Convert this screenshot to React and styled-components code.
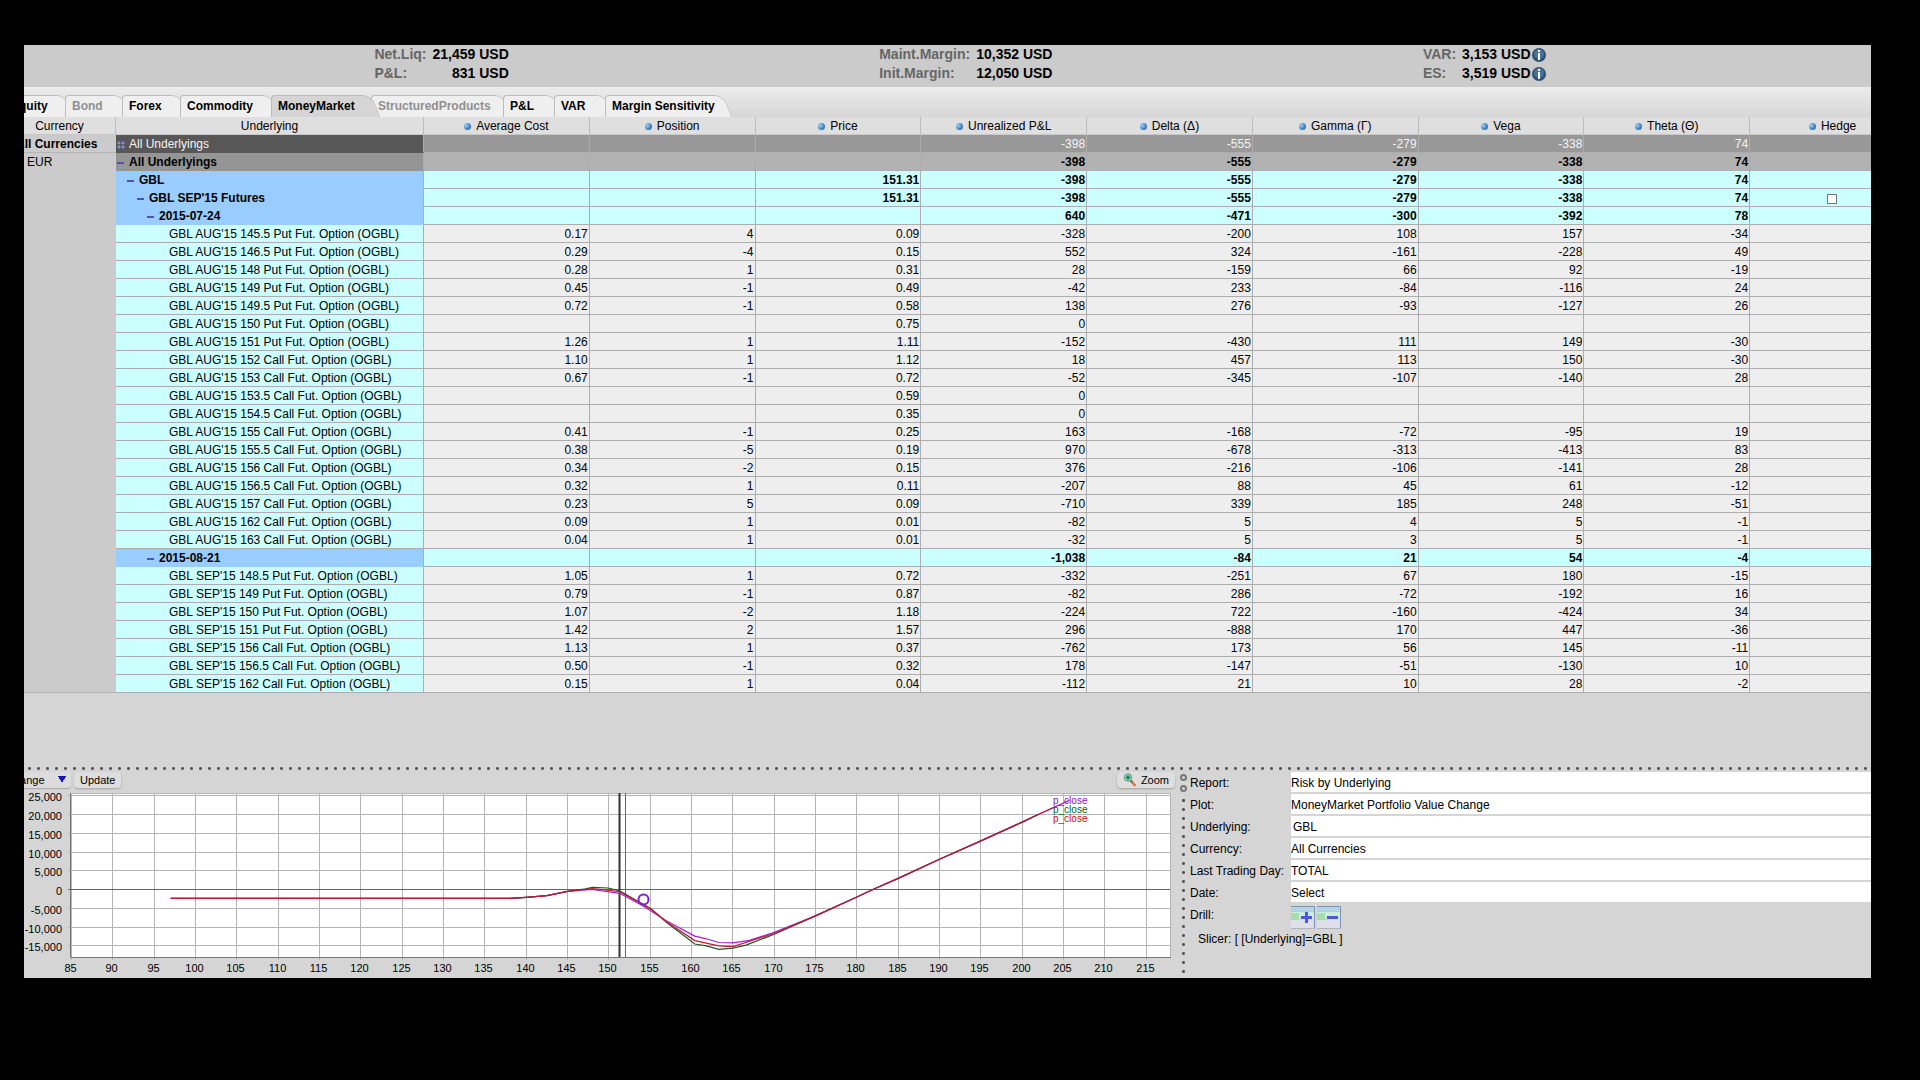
import React from "react";
import styled, { createGlobalStyle, css } from "styled-components";

const GlobalStyle = createGlobalStyle`
  * {
    box-sizing: border-box;
  }
  body {
    margin: 0;
    background: #000;
    color: #000;
    font-family: "Liberation Sans", Arial, sans-serif;
    font-size: 12px;
  }
  button,
  input,
  select {
    margin: 0;
    color: inherit;
    font-family: inherit;
    font-size: inherit;
  }
`;

const summary = [
  [
    { label: "Net.Liq:", value: "21,459 USD" },
    { label: "P&L:", value: "831 USD" },
  ],
  [
    { label: "Maint.Margin:", value: "10,352 USD" },
    { label: "Init.Margin:", value: "12,050 USD" },
  ],
  [
    { label: "VAR:", value: "3,153 USD", info: true },
    { label: "ES:", value: "3,519 USD", info: true },
  ],
];

const tabs = [
  { name: "Equity", width: 61 },
  { name: "Bond", width: 57, disabled: true },
  { name: "Forex", width: 58 },
  { name: "Commodity", width: 91 },
  { name: "MoneyMarket", width: 100, active: true },
  { name: "StructuredProducts", width: 132, disabled: true },
  { name: "P&L", width: 51 },
  { name: "VAR", width: 51 },
  { name: "Margin Sensitivity", width: 118 },
];

const measures = [
  "Average Cost",
  "Position",
  "Price",
  "Unrealized P&L",
  "Delta (Δ)",
  "Gamma (Γ)",
  "Vega",
  "Theta (Θ)",
  "Hedge",
];

// name, avg cost, position, price, unrealized, delta, gamma, vega, theta
const option = (...values) => ({ kind: "option", level: 4, values });
const group = (level, ...values) => ({ kind: "group", level, values });

const rows = [
  {
    kind: "selected",
    level: 0,
    values: ["All Underlyings", "", "", "", "-398", "-555", "-279", "-338", "74"],
  },
  {
    kind: "total",
    level: 0,
    values: ["All Underlyings", "", "", "", "-398", "-555", "-279", "-338", "74"],
  },
  group(1, "GBL", "", "", "151.31", "-398", "-555", "-279", "-338", "74"),
  {
    ...group(2, "GBL SEP'15 Futures", "", "", "151.31", "-398", "-555", "-279", "-338", "74"),
    hedge: true,
  },
  group(3, "2015-07-24", "", "", "", "640", "-471", "-300", "-392", "78"),
  option("GBL AUG'15 145.5 Put Fut. Option (OGBL)", "0.17", "4", "0.09", "-328", "-200", "108", "157", "-34"),
  option("GBL AUG'15 146.5 Put Fut. Option (OGBL)", "0.29", "-4", "0.15", "552", "324", "-161", "-228", "49"),
  option("GBL AUG'15 148 Put Fut. Option (OGBL)", "0.28", "1", "0.31", "28", "-159", "66", "92", "-19"),
  option("GBL AUG'15 149 Put Fut. Option (OGBL)", "0.45", "-1", "0.49", "-42", "233", "-84", "-116", "24"),
  option("GBL AUG'15 149.5 Put Fut. Option (OGBL)", "0.72", "-1", "0.58", "138", "276", "-93", "-127", "26"),
  option("GBL AUG'15 150 Put Fut. Option (OGBL)", "", "", "0.75", "0", "", "", "", ""),
  option("GBL AUG'15 151 Put Fut. Option (OGBL)", "1.26", "1", "1.11", "-152", "-430", "111", "149", "-30"),
  option("GBL AUG'15 152 Call Fut. Option (OGBL)", "1.10", "1", "1.12", "18", "457", "113", "150", "-30"),
  option("GBL AUG'15 153 Call Fut. Option (OGBL)", "0.67", "-1", "0.72", "-52", "-345", "-107", "-140", "28"),
  option("GBL AUG'15 153.5 Call Fut. Option (OGBL)", "", "", "0.59", "0", "", "", "", ""),
  option("GBL AUG'15 154.5 Call Fut. Option (OGBL)", "", "", "0.35", "0", "", "", "", ""),
  option("GBL AUG'15 155 Call Fut. Option (OGBL)", "0.41", "-1", "0.25", "163", "-168", "-72", "-95", "19"),
  option("GBL AUG'15 155.5 Call Fut. Option (OGBL)", "0.38", "-5", "0.19", "970", "-678", "-313", "-413", "83"),
  option("GBL AUG'15 156 Call Fut. Option (OGBL)", "0.34", "-2", "0.15", "376", "-216", "-106", "-141", "28"),
  option("GBL AUG'15 156.5 Call Fut. Option (OGBL)", "0.32", "1", "0.11", "-207", "88", "45", "61", "-12"),
  option("GBL AUG'15 157 Call Fut. Option (OGBL)", "0.23", "5", "0.09", "-710", "339", "185", "248", "-51"),
  option("GBL AUG'15 162 Call Fut. Option (OGBL)", "0.09", "1", "0.01", "-82", "5", "4", "5", "-1"),
  option("GBL AUG'15 163 Call Fut. Option (OGBL)", "0.04", "1", "0.01", "-32", "5", "3", "5", "-1"),
  group(3, "2015-08-21", "", "", "", "-1,038", "-84", "21", "54", "-4"),
  option("GBL SEP'15 148.5 Put Fut. Option (OGBL)", "1.05", "1", "0.72", "-332", "-251", "67", "180", "-15"),
  option("GBL SEP'15 149 Put Fut. Option (OGBL)", "0.79", "-1", "0.87", "-82", "286", "-72", "-192", "16"),
  option("GBL SEP'15 150 Put Fut. Option (OGBL)", "1.07", "-2", "1.18", "-224", "722", "-160", "-424", "34"),
  option("GBL SEP'15 151 Put Fut. Option (OGBL)", "1.42", "2", "1.57", "296", "-888", "170", "447", "-36"),
  option("GBL SEP'15 156 Call Fut. Option (OGBL)", "1.13", "1", "0.37", "-762", "173", "56", "145", "-11"),
  option("GBL SEP'15 156.5 Call Fut. Option (OGBL)", "0.50", "-1", "0.32", "178", "-147", "-51", "-130", "10"),
  option("GBL SEP'15 162 Call Fut. Option (OGBL)", "0.15", "1", "0.04", "-112", "21", "10", "28", "-2"),
];

const head = [
  [97, -2200],
  [138, -2200],
  [140, -1950],
  [142.5, -1500],
  [145, -350],
];

const tail = [
  [175, -6900],
  [180, -1870],
  [182, 190],
  [185, 3100],
  [190, 8200],
  [195, 13100],
  [200, 18100],
  [202, 20200],
];

const series = [
  {
    color: "#a51fd0",
    points: [...head, [148, 130], [151.3, -880], [154.1, -4200], [157, -8300], [160.4, -12300], [161.8, -13000], [163.3, -14000], [165, -14100], [167, -13400], [170, -11300], ...tail, [205.7, 23900]],
  },
  {
    color: "#1d5a24",
    points: [...head, [147.2, 300], [148, 700], [149.9, 530], [151.3, -190], [155.1, -5000], [157, -8700], [160.4, -14400], [161.8, -14900], [163.3, -15800], [165, -15500], [166.6, -14700], [170, -11800], ...tail],
  },
  {
    color: "#c2183c",
    points: [...head, [148, 400], [151.3, -450], [154.1, -3900], [155.1, -5100], [157, -8500], [160.4, -13500], [163.3, -14900], [165, -15100], [170, -11600], ...tail, [204, 22200]],
  },
];

const fields = [
  { label: "Report:", value: "Risk by Underlying" },
  { label: "Plot:", value: "MoneyMarket Portfolio Value Change" },
  { label: "Underlying:", value: "GBL", text: true },
  { label: "Currency:", value: "All Currencies" },
  { label: "Last Trading Day:", value: "TOTAL" },
  { label: "Date:", value: "Select" },
];

const InfoIcon = () => (
  <svg width="14" height="16" viewBox="0 0 14 16" aria-hidden="true">
    <circle cx="7" cy="8" r="7" fill="#2f5274" />
    <circle cx="7" cy="7" r="5" fill="#4c7196" />
    <path d="M6 3h2v2H6zM6 6h2v7H6z" fill="#fff" />
  </svg>
);

const MagnifierIcon = () => (
  <svg width="14" height="14" viewBox="0 0 14 14" aria-hidden="true">
    <path d="M8 8l4.500 5" stroke="#e0713f" strokeWidth="2.400" />
    <path d="M7.500 7.500l2 2" stroke="#8a6a50" strokeWidth="2" />
    <circle cx="5" cy="4.500" r="3.800" fill="#7fd0b4" stroke="#6d9f90" strokeWidth="1" />
    <path d="M5 2.500v4M3 4.500h4" stroke="#16703f" strokeWidth="1.300" />
  </svg>
);

const DrillIcon = ({ plus }) => (
  <svg width="24" height="23" viewBox="0 0 24 23" aria-hidden="true">
    <rect width="24" height="23" fill="#dde0e8" />
    <rect width="24" height="5" fill="#b4d4ec" />
    <rect y="5" width="24" height="8" fill="#cdeedd" />
    <rect y="7" width="8" height="6" fill="#a5dfae" />
    <path d="M0 5.500h24M0 13.500h10" stroke="#b5ccd4" />
    <path d="M0 .5h23.500V23" fill="none" stroke="#7e93b8" />
    <path d="M0 22.500h24" stroke="#b0b4bd" />
    <path d="M10 11.500h11" stroke="#4a5ad8" strokeWidth="3" />
    {plus && <path d="M15.500 6v11" stroke="#4a5ad8" strokeWidth="3" />}
  </svg>
);

const PLOT = { left: 46, right: 1147, top: 3, bottom: 167 };
const px = (price) => 47.5 + (price - 85) * 8.267;
const py = (value) => Math.round(100 - value * 0.00375) - 0.5;
const line = (points) =>
  points.map(([x, v]) => `${px(x).toFixed(1)},${(100 - v * 0.00375).toFixed(1)}`).join(" ");

const prices = Array.from({ length: 27 }, (_, i) => 85 + i * 5);
const levels = Array.from({ length: 9 }, (_, i) => 25000 - i * 5000);

const ValueChart = () => (
  <ChartSvg viewBox="0 0 1155 188" role="img" aria-label="Portfolio value change">
    <rect
      x={PLOT.left}
      y={PLOT.top}
      width={PLOT.right - PLOT.left}
      height={PLOT.bottom - PLOT.top}
      fill="#fff"
    />
    {prices.map((price) => {
      const x = Math.floor(px(price)) + 0.5;
      return (
        <g key={price}>
          <path d={`M${x} ${PLOT.top}V${PLOT.bottom + 3}`} stroke="#b4b4b4" />
          <text x={x - 1} y="182" textAnchor="middle">
            {price}
          </text>
        </g>
      );
    })}
    {levels.map((value) => (
      <g key={value}>
        <path
          d={`M${PLOT.left - 2} ${py(value)}H${PLOT.right}`}
          stroke={value === 0 ? "#666" : "#b4b4b4"}
        />
        <text x="38" y={py(value) + 5} textAnchor="end">
          {value.toLocaleString("en-US")}
        </text>
      </g>
    ))}
    <path
      d={`M${PLOT.left} ${PLOT.top + 0.5}H${PLOT.right - 0.5}V${PLOT.bottom}`}
      fill="none"
      stroke="#b4b4b4"
    />
    <path
      d={`M${PLOT.left + 0.5} ${PLOT.top}V${PLOT.bottom + 0.5}H${PLOT.right}`}
      fill="none"
      stroke="#777"
    />
    <path d={`M595.500 ${PLOT.top}V${PLOT.bottom}`} stroke="#333" strokeWidth="2" />
    <path d={`M601.500 ${PLOT.top}V${PLOT.bottom}`} stroke="#666" />
    {series.map(({ color, points }) => (
      <polyline key={color} points={line(points)} fill="none" stroke={color} strokeWidth="1.200" />
    ))}
    <circle cx="619.500" cy="109.500" r="5" fill="none" stroke="#7a1fd6" strokeWidth="2" />
    <Legend>
      <text x="1029" y="14" fill="#8a10cc">p_close</text>
      <text x="1029" y="23" fill="#006a12">p_close</text>
      <text x="1029" y="32" fill="#d00808">p_close</text>
    </Legend>
  </ChartSvg>
);

const App = () => {
  return (
    <Page>
      <GlobalStyle />
      <Frame>
        <Workspace>
          <Summary>
            {summary.map((items) => (
              <Metrics key={items[0].label}>
                {items.map(({ label, value, info }) => (
                  <React.Fragment key={label}>
                    <dt>{label}</dt>
                    <dd>
                      {value}
                      {info && <InfoIcon />}
                    </dd>
                  </React.Fragment>
                ))}
              </Metrics>
            ))}
          </Summary>
          <TabBar role="tablist">
            {tabs.map(({ name, width, active, disabled }) => (
              <Tab
                key={name}
                type="button"
                role="tab"
                aria-selected={!!active}
                disabled={disabled}
                $width={width}
                $active={active}
              >
                <span>{name}</span>
              </Tab>
            ))}
          </TabBar>
          <RiskTable>
            <colgroup>
              <col className="currency" />
              <col className="underlying" />
              {measures.map((name) => (
                <col key={name} />
              ))}
            </colgroup>
            <thead>
              <tr>
                <HeadCell scope="col">Currency</HeadCell>
                <HeadCell scope="col">Underlying</HeadCell>
                {measures.map((name) => (
                  <HeadCell key={name} scope="col">
                    <Ball />
                    {name}
                  </HeadCell>
                ))}
              </tr>
            </thead>
            <tbody>
              {rows.map(({ kind, level, values, hedge }, index) => {
                const [name, ...numbers] = values;
                return (
                  <Row key={index} $kind={kind}>
                    {index === 0 && <CurrencyCell $all>All Currencies</CurrencyCell>}
                    {index === 1 && <CurrencyCell rowSpan={rows.length - 1}>EUR</CurrencyCell>}
                    <NameCell scope="row" $kind={kind}>
                      <Tree $level={level}>
                        {kind === "option" ? (
                          <i />
                        ) : (
                          <Toggle type="button" aria-label={`Toggle ${name}`} $dots={kind === "selected"} />
                        )}
                        {name}
                      </Tree>
                    </NameCell>
                    {numbers.map((number, i) => (
                      <Cell key={measures[i]}>{number}</Cell>
                    ))}
                    <Cell>{hedge && <HedgeBox type="checkbox" aria-label="Hedge" />}</Cell>
                  </Row>
                );
              })}
            </tbody>
          </RiskTable>
        </Workspace>
        <Splitter />
        <Bottom>
          <ChartPane>
            <Toolbar>
              <PlotSelect aria-label="Plot type" defaultValue="Change">
                <option>Change</option>
              </PlotSelect>
              <ToolButton type="button">Update</ToolButton>
              <ToolButton type="button" $end>
                <MagnifierIcon />
                Zoom
              </ToolButton>
            </Toolbar>
            <ValueChart />
          </ChartPane>
          <SideSplitter>
            <span />
            <span />
          </SideSplitter>
          <Form>
            {fields.map(({ label, value, text }) => {
              const id = label.toLowerCase().replace(/[^a-z]/g, "");
              return (
                <React.Fragment key={id}>
                  <label htmlFor={id}>{label}</label>
                  {text ? (
                    <FieldInput id={id} type="text" defaultValue={value} />
                  ) : (
                    <FieldSelect id={id} defaultValue={value}>
                      <option>{value}</option>
                    </FieldSelect>
                  )}
                </React.Fragment>
              );
            })}
            <span>Drill:</span>
            <Drill>
              <button type="button" aria-label="Drill in">
                <DrillIcon plus />
              </button>
              <button type="button" aria-label="Drill out">
                <DrillIcon />
              </button>
            </Drill>
            <Slicer>Slicer: [ [Underlying]=GBL ]</Slicer>
          </Form>
        </Bottom>
      </Frame>
    </Page>
  );
};

const Page = styled.div`
  padding: 45px 49px 0 24px;
`;

const Frame = styled.main`
  overflow: hidden;
  background: #d5d5d5;
`;

/* slightly wider than the frame, so both outer columns run past its edges */
const Workspace = styled.section`
  margin: 0 -45px 72px -20px;
`;

const Summary = styled.header`
  display: flex;
  justify-content: space-evenly;
  padding-bottom: 4px;
  background: #cbcbcb;
`;

const Metrics = styled.dl`
  display: grid;
  grid-template-columns: auto auto;
  column-gap: 6px;
  margin: 0;
  font-size: 14px;
  font-weight: bold;
  line-height: 19px;
  dt {
    color: #666;
  }
  dd {
    display: flex;
    justify-content: flex-end;
    align-items: center;
    gap: 1px;
    margin: 0;
  }
`;

const TabBar = styled.div`
  display: flex;
  padding-top: 8px;
  background: linear-gradient(#ececec, #d6d6d6);
`;

const Tab = styled.button`
  position: relative;
  flex: none;
  width: ${({ $width }) => $width}px;
  height: 22px;
  padding: 0 0 0 7px;
  border: 0;
  background: none;
  font-weight: bold;
  text-align: left;
  white-space: nowrap;
  z-index: ${({ $active }) => ($active ? 1 : 0)};
  &:disabled {
    color: #8f8f8f;
  }
  span {
    position: relative;
    z-index: 1;
  }
  &::before,
  &::after {
    content: "";
    position: absolute;
    top: 0;
    bottom: 0;
    border-top: 1px solid #bcbcbc;
    background: ${({ $active }) => ($active ? "#d5d5d5" : "#efefef")};
  }
  &::before {
    left: 0;
    right: 12px;
    border-left: 1px solid #bcbcbc;
    border-top-left-radius: 4px;
  }
  &::after {
    right: -5px;
    width: 24px;
    border-right: 1px solid #bcbcbc;
    border-top-right-radius: 9px;
    transform: skewX(22deg);
  }
`;

const RiskTable = styled.table`
  width: 100%;
  table-layout: fixed;
  border-collapse: separate;
  border-spacing: 0;
  line-height: 15px;
  .currency {
    width: 112px;
  }
  .underlying {
    width: 308px;
  }
`;

const HeadCell = styled.th`
  height: 18px;
  padding: 2px 0 0;
  border-right: 1px solid #bdbdbd;
  border-bottom: 1px solid #c8c8c8;
  background: #dfdfdf;
  font-weight: normal;
`;

const Ball = styled.i`
  display: inline-block;
  width: 7px;
  height: 7px;
  margin-right: 5px;
  border-radius: 50%;
  background: radial-gradient(circle at 30% 35%, #9fd3f5, #3c7fc0 60%, #2f5f9a);
`;

const Cell = styled.td`
  height: 18px;
  padding: 2px 1px 0 0;
  border-right: 1px solid #adadad;
  border-bottom: 1px solid #adadad;
  text-align: right;
`;

const rowKinds = {
  selected: css`
    background: #989898;
    color: #f4f4f4;
  `,
  total: css`
    background: #b2b2b2;
    font-weight: bold;
  `,
  group: css`
    background: #ccffff;
    font-weight: bold;
  `,
  option: css`
    background: #eeeeee;
  `,
};

const Row = styled.tr`
  ${({ $kind }) => rowKinds[$kind]}
`;

const CurrencyCell = styled.td`
  padding: 2px 0 0 ${({ $all }) => ($all ? 12 : 23)}px;
  border-bottom: 1px solid #b5b5b5;
  background: #cbcbcb;
  color: #000;
  font-weight: ${({ $all }) => ($all ? "bold" : "normal")};
  vertical-align: top;
  white-space: nowrap;
`;

const nameColors = {
  selected: "#575757",
  total: "#959595",
  group: "#99ccff",
  option: "#ccffff",
};

const NameCell = styled.th`
  height: 18px;
  padding: 2px 0 0;
  border-right: 1px solid #adadad;
  border-bottom: 1px solid ${({ $kind }) => ($kind === "option" ? "#adadad" : nameColors[$kind])};
  background: ${({ $kind }) => nameColors[$kind]};
  font-weight: inherit;
  text-align: left;
`;

const Tree = styled.div`
  display: flex;
  align-items: center;
  gap: 4px;
  padding-left: ${({ $level }) => $level * 10 + 1}px;
  white-space: nowrap;
  i {
    width: 8px;
  }
`;

const Toggle = styled.button`
  width: 8px;
  height: 8px;
  padding: 0;
  border: 0;
  background: ${({ $dots }) =>
    $dots
      ? "radial-gradient(circle, #8a8ae0 1px, transparent 2px) 0 0 / 4px 4px"
      : "linear-gradient(#5050b8, #5050b8) 0 50% / 7px 2px no-repeat"};
`;

const HedgeBox = styled.input`
  appearance: none;
  display: block;
  width: 10px;
  height: 10px;
  && {
    margin: 0 auto;
  }
  border: 1px solid #777;
  background: #fff;
`;

const Splitter = styled.div`
  height: 7px;
  background: radial-gradient(circle, #555 1px, transparent 2px) 1px 0 / 9px 7px repeat-x;
`;

const Bottom = styled.section`
  display: grid;
  grid-template-columns: minmax(0, 1155fr) 9px minmax(0, 683fr);
`;

const ChartPane = styled.div`
  min-width: 0;
`;

const Toolbar = styled.div`
  display: flex;
  gap: 3px;
  height: 18px;
  padding-right: 4px;
  font-size: 11px;
`;

const PlotSelect = styled.select`
  appearance: none;
  width: 68px;
  height: 16px;
  && {
    margin-left: -21px;
  }
  padding: 0 0 0 3px;
  border: 0;
  border-radius: 4px;
  background:
    linear-gradient(to bottom left, #1414c8 50%, transparent 51%) 55px 4px / 4px 7px no-repeat,
    linear-gradient(to bottom right, #1414c8 50%, transparent 51%) 59px 4px / 4px 7px no-repeat,
    #dcdcdc;
  box-shadow: 0 1px 1px #a8a8a8;
`;

const ToolButton = styled.button`
  display: flex;
  align-items: center;
  gap: 4px;
  height: 16px;
  && {
    margin-left: ${({ $end }) => ($end ? "auto" : "0")};
  }
  padding: 0 6px;
  border: 0;
  border-radius: 4px;
  background: #dedede;
  box-shadow: 0 1px 2px #a0a0a0;
`;

const ChartSvg = styled.svg`
  display: block;
  width: 100%;
  font-size: 11px;
`;

const Legend = styled.g`
  font-size: 10px;
`;

const SideSplitter = styled.div`
  display: flex;
  flex-direction: column;
  align-items: center;
  gap: 4px;
  padding-top: 2px;
  background: radial-gradient(circle, #555 1px, transparent 2px) 0 24px / 9px 9px no-repeat;
  background-repeat: no-repeat, no-repeat;
  &::after {
    content: "";
    flex: 1;
    width: 9px;
    background: radial-gradient(circle, #555 1px, transparent 2px) 0 0 / 9px 9px;
  }
  span {
    width: 7px;
    height: 7px;
    border: 2px solid #777;
    border-radius: 50%;
  }
`;

const Form = styled.form`
  display: grid;
  grid-template-columns: 101px minmax(0, 1fr);
  align-content: start;
  row-gap: 2px;
  padding-left: 2px;
  line-height: 18px;
  > label,
  > span {
    padding-top: 2px;
    white-space: nowrap;
  }
`;

const fieldStyle = css`
  appearance: none;
  width: 100%;
  height: 20px;
  border: 0;
  border-radius: 0;
  background: #fff;
`;

const FieldSelect = styled.select`
  ${fieldStyle}
  padding: 2px 0 0;
`;

const FieldInput = styled.input`
  ${fieldStyle}
  padding: 2px 2px 0;
`;

const Drill = styled.div`
  display: flex;
  gap: 2px;
  padding-top: 2px;
  button {
    display: block;
    height: 23px;
    padding: 0;
    border: 0;
    background: none;
  }
`;

const Slicer = styled.output`
  grid-column: 1 / -1;
  padding-left: 8px;
  line-height: 16px;
`;

export default App;
